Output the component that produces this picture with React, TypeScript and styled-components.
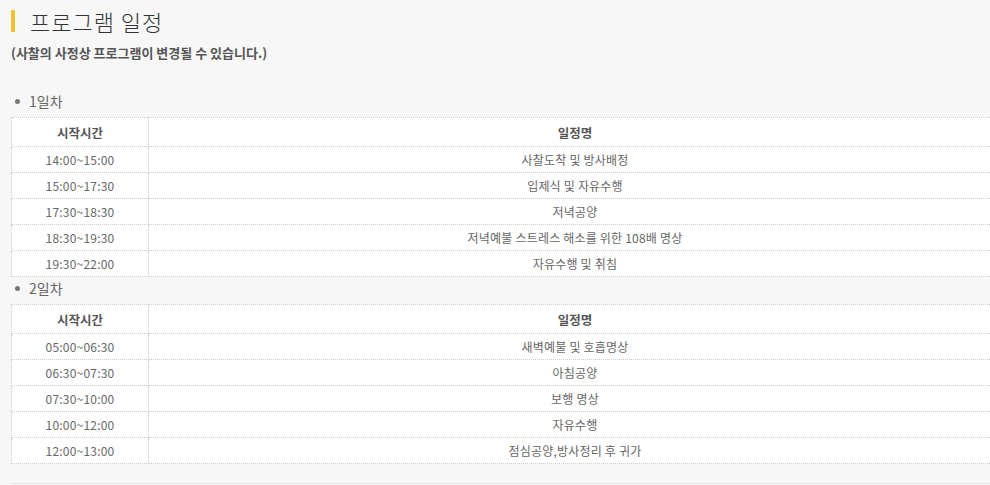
import { createGlobalStyle, styled } from 'styled-components';

const GlobalStyle = createGlobalStyle`
  html,
  body {
    margin: 0;
    padding: 0;
    background: #f7f7f7;
    overflow: hidden;
    font-family: 'Noto Sans CJK KR', 'Noto Sans', sans-serif;
  }
`;

const Page = styled.div`
  width: 1002px;
  padding: 10px 0 0 11px;
  box-sizing: border-box;
`;

const Title = styled.h2`
  margin: 0;
  display: flex;
  align-items: center;
  gap: 15px;
  height: 22px;
  font-size: 22px;
  font-weight: 300;
  line-height: 22px;
  letter-spacing: 1px;
  color: #333;

  &::before {
    content: '';
    width: 4px;
    height: 22px;
    background: #f2c12e;
  }
`;

const Notice = styled.p`
  margin: 12px 0 0;
  font-size: 13px;
  font-weight: 700;
  line-height: 18px;
  color: #555;
`;

const Day = styled.div`
  margin-top: 28px;

  & + & {
    margin-top: 0;
  }
`;

const DayLabel = styled.h3`
  margin: 0;
  display: flex;
  align-items: center;
  gap: 9px;
  height: 20px;
  padding: 1px 0 6px 4px;
  font-size: 14px;
  font-weight: 400;
  line-height: 20px;
  color: #666;

  &::before {
    content: '';
    width: 5px;
    height: 5px;
    border-radius: 50%;
    background: #777;
  }
`;

const Table = styled.table`
  width: 100%;
  border-collapse: collapse;
  background: #fff;
  font-size: 12px;
  color: #666;
`;

const Th = styled.th<{ $narrow?: boolean }>`
  width: ${({ $narrow }) => ($narrow ? '136px' : 'auto')};
  height: 28px;
  padding: 0;
  border: 1px dotted #ccc;
  font-size: 12.5px;
  font-weight: 700;
  color: #555;
  text-align: center;
`;

const Td = styled.td`
  height: 25px;
  padding: 0;
  border: 1px dotted #ccc;
  letter-spacing: 0.2px;
  text-align: center;
`;

const Footer = styled.div`
  margin-top: 19px;
  border-top: 1px solid #e6e6e6;
`;

interface Item {
  time: string;
  title: string;
}

const days: { label: string; items: Item[] }[] = [
  {
    label: '1일차',
    items: [
      { time: '14:00~15:00', title: '사찰도착 및 방사배정' },
      { time: '15:00~17:30', title: '입제식 및 자유수행' },
      { time: '17:30~18:30', title: '저녁공양' },
      { time: '18:30~19:30', title: '저녁예불 스트레스 해소를 위한 108배 명상' },
      { time: '19:30~22:00', title: '자유수행 및 취침' },
    ],
  },
  {
    label: '2일차',
    items: [
      { time: '05:00~06:30', title: '새벽예불 및 호흡명상' },
      { time: '06:30~07:30', title: '아침공양' },
      { time: '07:30~10:00', title: '보행 명상' },
      { time: '10:00~12:00', title: '자유수행' },
      { time: '12:00~13:00', title: '점심공양,방사정리 후 귀가' },
    ],
  },
];

const App = () => {
  return (
    <Page>
      <GlobalStyle />
      <Title>프로그램 일정</Title>
      <Notice>(사찰의 사정상 프로그램이 변경될 수 있습니다.)</Notice>
      {days.map((day) => (
        <Day key={day.label}>
          <DayLabel>{day.label}</DayLabel>
          <Table>
            <thead>
              <tr>
                <Th $narrow>시작시간</Th>
                <Th>일정명</Th>
              </tr>
            </thead>
            <tbody>
              {day.items.map((item) => (
                <tr key={item.time}>
                  <Td>{item.time}</Td>
                  <Td>{item.title}</Td>
                </tr>
              ))}
            </tbody>
          </Table>
        </Day>
      ))}
      <Footer />
    </Page>
  );
};

export default App;
